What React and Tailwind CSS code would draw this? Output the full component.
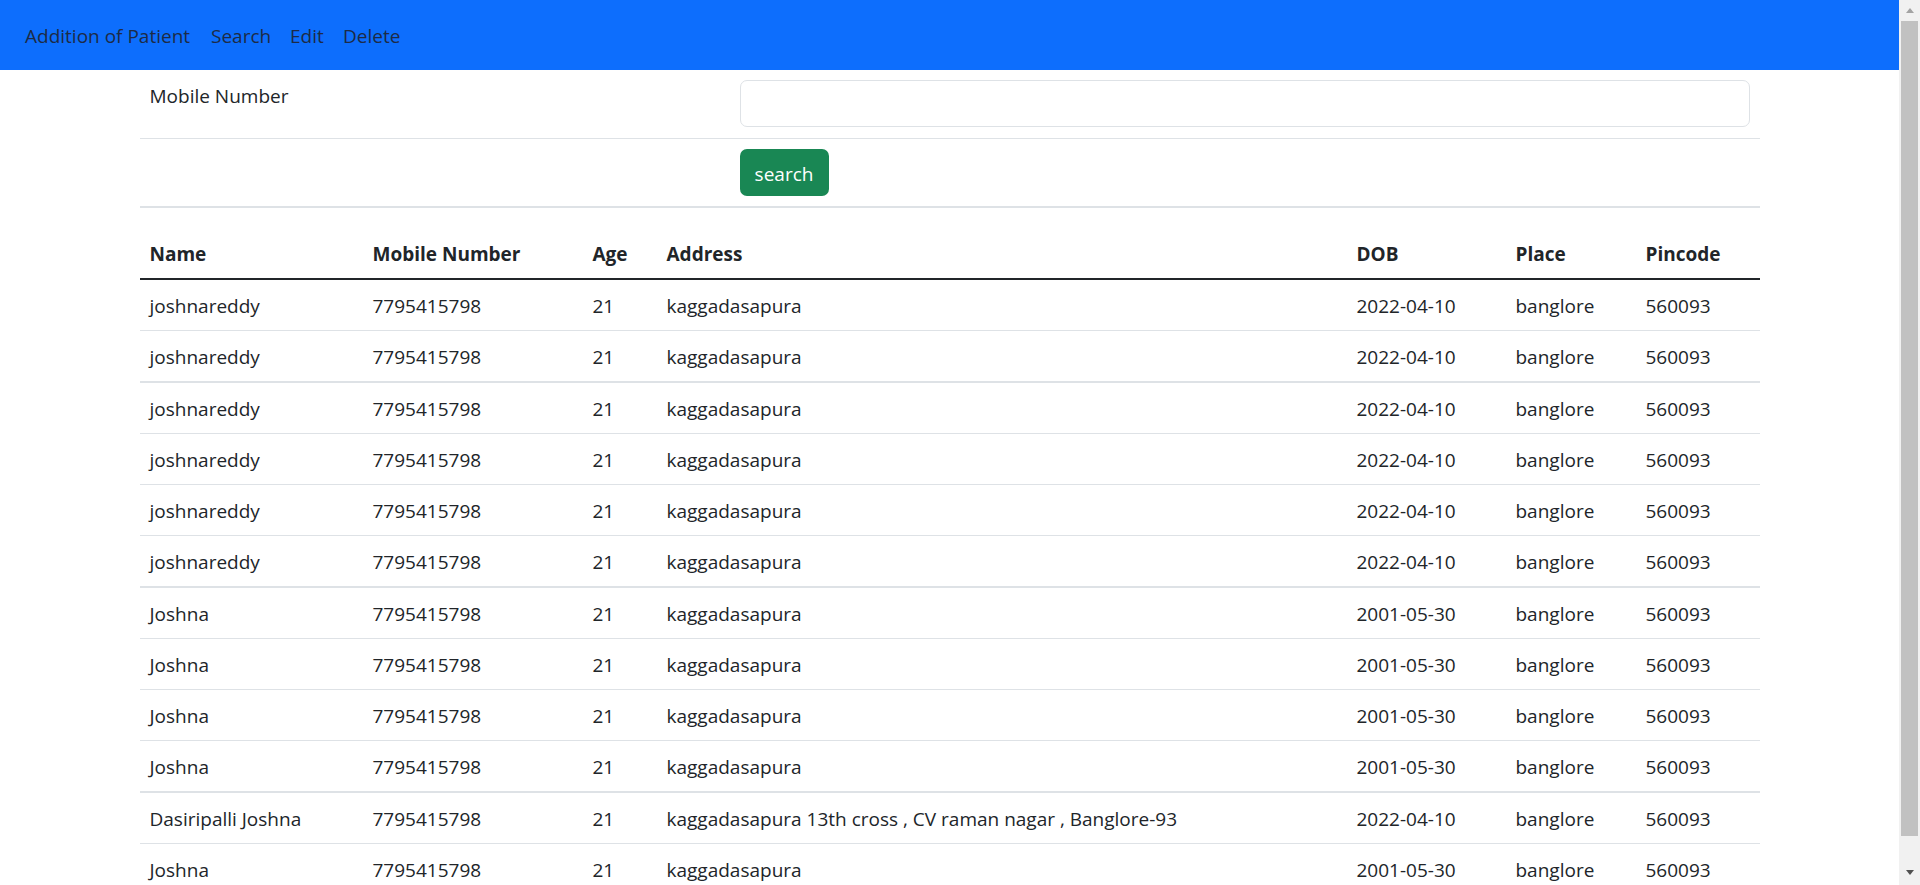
const rows = [
  ...Array(6).fill({ name: 'joshnareddy', addr: 'kaggadasapura', dob: '2022-04-10' }),
  ...Array(4).fill({ name: 'Joshna', addr: 'kaggadasapura', dob: '2001-05-30' }),
  { name: 'Dasiripalli Joshna', addr: 'kaggadasapura 13th cross , CV raman nagar , Banglore-93', dob: '2022-04-10' },
  { name: 'Joshna', addr: 'kaggadasapura', dob: '2001-05-30' },
]

const FONT = { fontFamily: '"Segoe UI", "Open Sans", "Noto Sans", sans-serif' }

function Scrollbar() {
  return (
    <div className="w-[21px] shrink-0 bg-[#f1f1f1] flex flex-col items-center">
      <div className="h-[21px] flex items-center justify-center">
        <div className="w-0 h-0 border-x-[4.5px] border-x-transparent border-b-[5px] border-b-[#a3a3a3]" />
      </div>
      <div className="w-[17px] h-[815px] bg-[#c1c1c1]" />
      <div className="flex-1 flex items-end justify-center pb-[10px]">
        <div className="w-0 h-0 border-x-[4.5px] border-x-transparent border-t-[5px] border-t-[#505050]" />
      </div>
    </div>
  )
}

export default function App() {
  return (
    <div className="flex h-[885px] overflow-hidden bg-white text-[19px] leading-[30px] text-[#212529]" style={FONT}>
      <div className="flex-1 min-w-0 overflow-hidden">
        <nav className="h-[70px] bg-[#0d6efd] flex items-center pt-[2px] px-[15px] text-[#1d2b45] whitespace-nowrap">
          <a className="w-[186px] shrink-0 px-[10px]">Addition of Patient</a>
          <a className="w-[79px] shrink-0 px-[10px]">Search</a>
          <a className="w-[53px] shrink-0 px-[10px]">Edit</a>
          <a className="shrink-0 px-[10px]">Delete</a>
        </nav>

        <div className="w-[1650px] mx-auto px-[15px]">
          <div className="grid grid-cols-[590px_1fr] border-b border-[#dee2e6]">
            <div className="px-[10px] pt-[11px]">Mobile Number</div>
            <div className="px-[10px] pt-[10px] pb-[11px]">
              <input className="block w-full h-[47px] border border-[#dee2e6] rounded-[7px] bg-white outline-none" />
            </div>
          </div>
          <div className="grid grid-cols-[590px_1fr] border-b-2 border-[#dee2e6]">
            <div />
            <div className="p-[10px]">
              <button className="w-[89px] h-[47px] pt-[2px] rounded-[7px] bg-[#198754] text-white">search</button>
            </div>
          </div>

          <table className="mt-[20px] w-full table-fixed border-collapse">
            <colgroup>
              <col style={{ width: '223px' }} /><col style={{ width: '220px' }} /><col style={{ width: '74px' }} />
              <col /><col style={{ width: '159px' }} /><col style={{ width: '130px' }} /><col style={{ width: '124px' }} />
            </colgroup>
            <thead>
              <tr className="border-b-2 border-[#212529] text-left">
                {['Name', 'Mobile Number', 'Age', 'Address', 'DOB', 'Place', 'Pincode'].map((h) => (
                  <th key={h} className="px-[10px] pt-[11px] pb-[9px] font-bold">{h}</th>
                ))}
              </tr>
            </thead>
            <tbody>
              {rows.map((r, i) => (
                <tr key={i} className={i % 4 === 1 ? 'border-b-2 border-[#dee2e6]' : 'border-b border-[#dee2e6]'}>
                  <td className="px-[10px] pt-[11px] pb-[9px] truncate">{r.name}</td>
                  <td className="px-[10px] pt-[11px] pb-[9px]">7795415798</td>
                  <td className="px-[10px] pt-[11px] pb-[9px]">21</td>
                  <td className="px-[10px] pt-[11px] pb-[9px] truncate">{r.addr}</td>
                  <td className="px-[10px] pt-[11px] pb-[9px]">{r.dob}</td>
                  <td className="px-[10px] pt-[11px] pb-[9px]">banglore</td>
                  <td className="px-[10px] pt-[11px] pb-[9px]">560093</td>
                </tr>
              ))}
            </tbody>
          </table>
        </div>
      </div>
      <Scrollbar />
    </div>
  )
}
